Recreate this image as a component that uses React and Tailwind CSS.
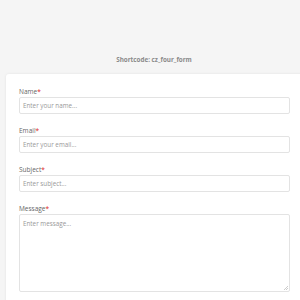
export default function App() {
  const fields = [
    { label: 'Name', placeholder: 'Enter your name...' },
    { label: 'Email', placeholder: 'Enter your email...' },
    { label: 'Subject', placeholder: 'Enter subject...' },
  ]

  return (
    <div
      className="w-[300px] h-[300px] overflow-hidden bg-[#f5f5f5]"
      style={{ fontFamily: '"Open Sans", sans-serif' }}
    >
      <div className="w-[308px] h-[74px] flex items-end justify-center pb-[10px]">
        <p className="text-[6.3px] font-bold text-[#8a8a8a]">Shortcode: cz_four_form</p>
      </div>

      <div className="ml-[6px] w-[300px] h-[240px] bg-white rounded-[3px] shadow-[0_0_3px_rgba(0,0,0,0.08)] pl-[13px] pr-[16px] pt-[13px]">
        {fields.map((f) => (
          <div key={f.label} className="mb-[12px]">
            <label className="block text-[6.5px] leading-[9px] text-[#666] mb-[1px]">
              {f.label}
              <span className="text-[#e02020]">*</span>
            </label>
            <div className="h-[17px] border border-[#e3e3e3] rounded-[2px] px-[3px] flex items-center text-[6.3px] text-[#999]">
              {f.placeholder}
            </div>
          </div>
        ))}
        <label className="block text-[6.5px] leading-[9px] text-[#666] mb-[1px]">
          Message<span className="text-[#e02020]">*</span>
        </label>
        <div className="relative h-[78px] border border-[#e3e3e3] rounded-[2px] px-[3px] pt-[4px] text-[6.3px] text-[#999]">
          Enter message...
          <svg className="absolute right-[1px] bottom-[1px]" width="4" height="4" viewBox="0 0 4 4">
            <path d="M4 0L0 4M4 2L2 4" stroke="#aaa" strokeWidth="0.6" />
          </svg>
        </div>
      </div>
    </div>
  )
}
